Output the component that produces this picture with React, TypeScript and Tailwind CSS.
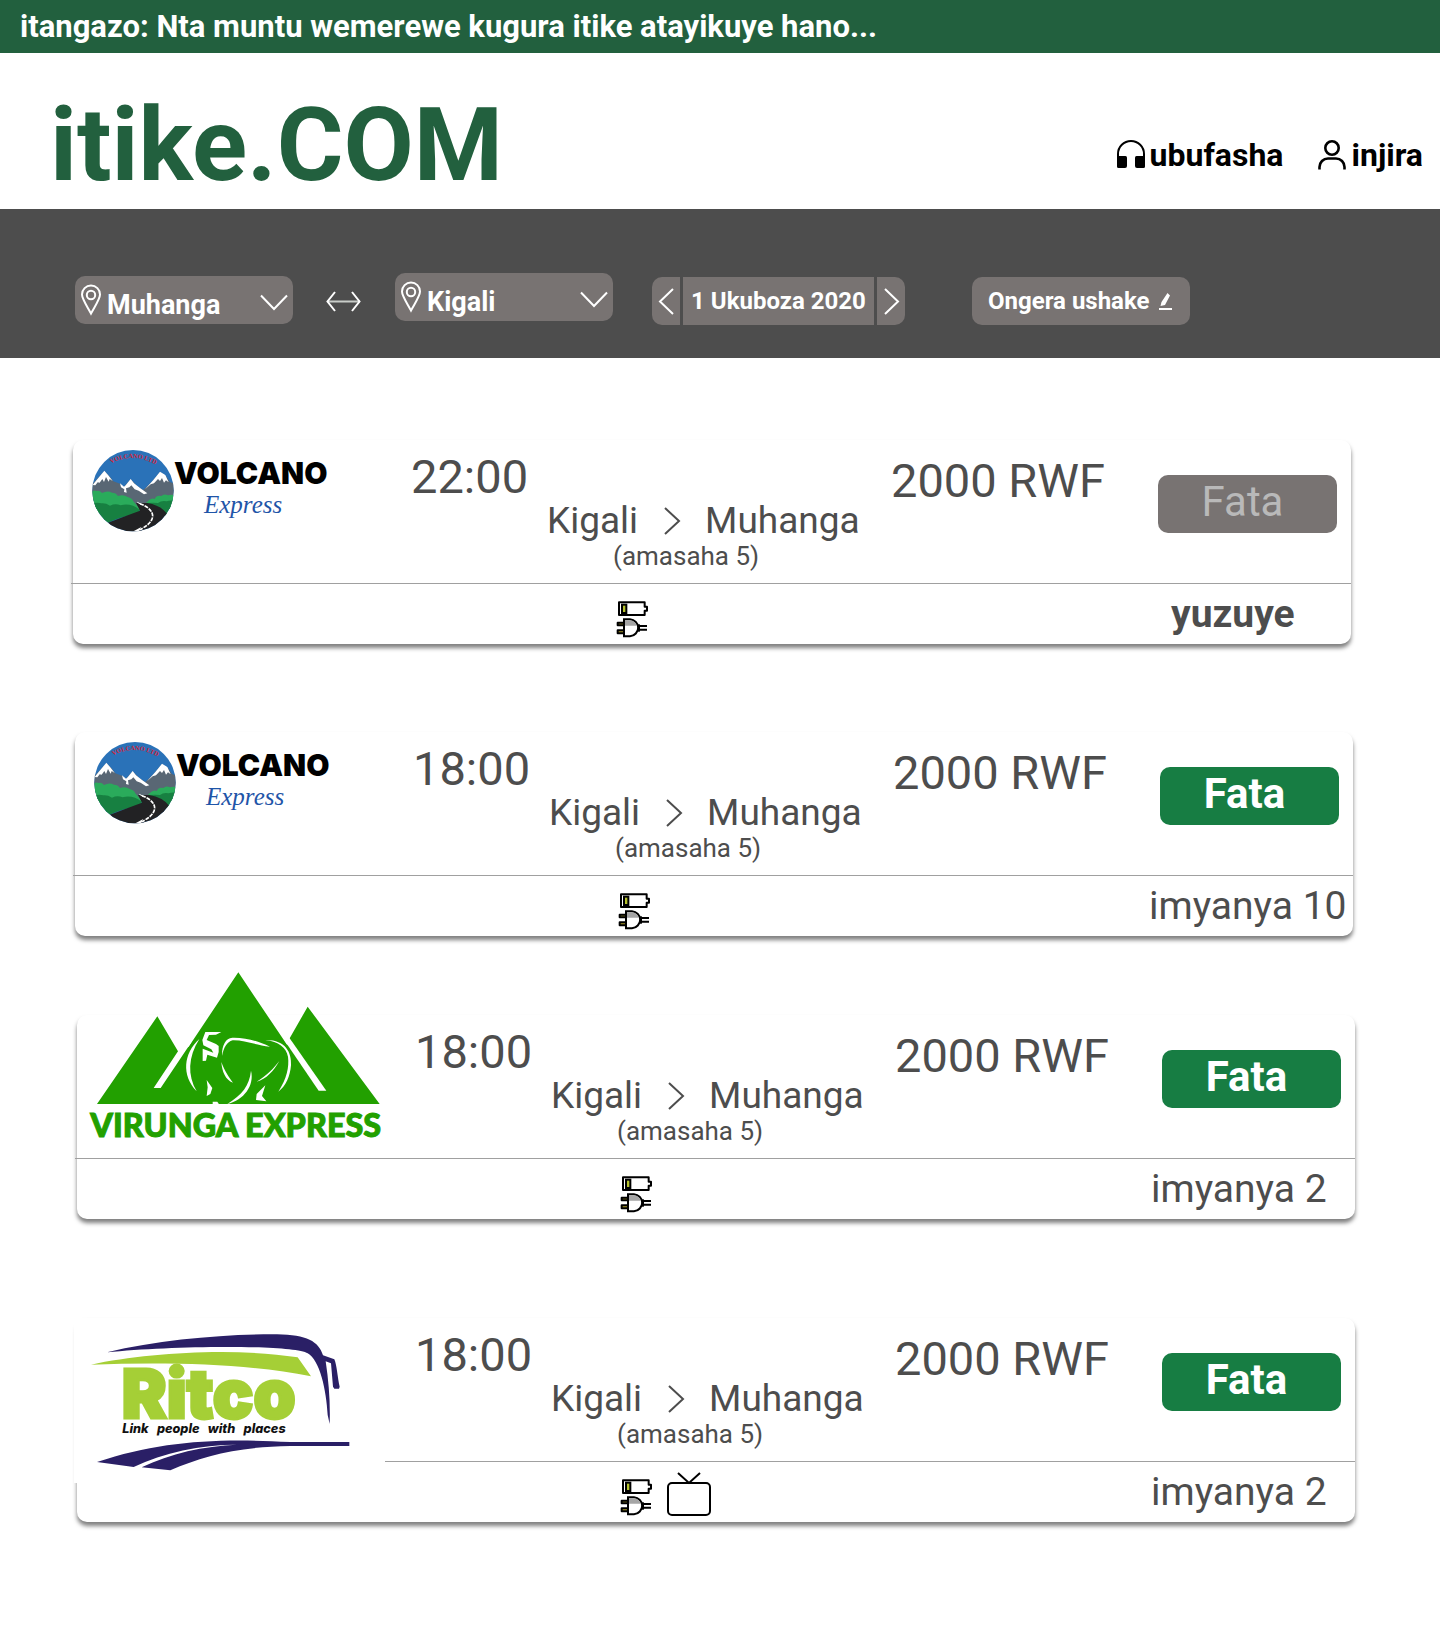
import React from "react";

const TOWNS = ["Muhanga", "Kigali"];

function HeadphonesIcon() {
  return (
    <svg width="30" height="30" viewBox="0 0 30 30" aria-hidden="true">
      <path d="M2 20V15a13 13 0 0 1 26 0v5" fill="none" stroke="#000" strokeWidth="2" />
      <path d="M1 17H9.500a1.500 1.500 0 0 1 1.500 1.500V27a2 2 0 0 1-2 2H2.500A1.500 1.500 0 0 1 1 27.500Z" />
      <path d="M29 17H20.500a1.500 1.500 0 0 0-1.500 1.500V27a2 2 0 0 0 2 2H27.500a1.500 1.500 0 0 0 1.500-1.500Z" />
    </svg>
  );
}

function UserIcon() {
  return (
    <svg width="30" height="32" viewBox="0 0 30 32" fill="none" stroke="#000" strokeWidth="2.600" aria-hidden="true">
      <circle cx="15" cy="9" r="6.700" />
      <path d="M2.500 30.500V28a8.500 8.500 0 0 1 8.500-8.500h8a8.500 8.500 0 0 1 8.500 8.500v2.500" />
    </svg>
  );
}

function PinIcon() {
  return (
    <svg width="22" height="32" viewBox="0 0 22 32" fill="none" stroke="#fff" strokeWidth="2" aria-hidden="true">
      <path d="M11 29.500C7 22 2 15 2 10.500a9 9 0 0 1 18 0C20 15 15 22 11 29.500Z" />
      <circle cx="11" cy="11" r="4.200" />
    </svg>
  );
}

function TownSelect({ label, value }: { label: string; value: string }) {
  return (
    <div className="relative w-[218px] shrink-0 text-white">
      <select
        aria-label={label}
        defaultValue={value}
        className="h-12 w-full appearance-none rounded-[10px] bg-[#787372] pt-[9px] pl-8 text-[27px] leading-[38px] font-bold"
      >
        {TOWNS.map((town) => (
          <option key={town}>{town}</option>
        ))}
      </select>
      <span className="pointer-events-none absolute top-2 left-[5px]">
        <PinIcon />
      </span>
      <svg
        className="pointer-events-none absolute top-[18px] right-[5px]"
        width="28"
        height="17"
        viewBox="0 0 28 17"
        fill="none"
        stroke="#fff"
        strokeWidth="2"
        aria-hidden="true"
      >
        <path d="M1 1.500 14 15 27 1.500" />
      </svg>
    </div>
  );
}

function VolcanoLogo() {
  return (
    <div className="flex pt-[10px] pl-[19px]">
      <svg width="82" height="82" viewBox="96 60 246 246" aria-hidden="true" className="shrink-0">
        <defs>
          <clipPath id="badge">
            <circle cx="219" cy="182" r="122" />
          </clipPath>
          <path id="badge-arc" d="M154 101Q222 62 300 112" />
        </defs>
        <g clipPath="url(#badge)">
          <rect x="96" y="60" width="246" height="246" fill="#2a72b8" />
          <path
            d="M90 170 133 123 150 140 160 154 182 162 190 172 212 148 232 168 250 180 275 155 300 126 318 138 330 156 345 162V240H90Z"
            fill="#596774"
          />
          <path
            d="M98 165 108 152 133 122 146 137 158 153 149 147 146 155 138 141 132 156 127 147 119 158 113 157 106 166Z"
            fill="#fff"
          />
          <path
            d="M180 160 192 170 197 166 212 147 222 160 240 174 262 190 252 193 236 182 224 178 214 166 208 172 198 175 200 188 192 186 193 178 183 172Z"
            fill="#fff"
          />
          <path
            d="M255 178 280 150 300 125 316 135 326 157 318 151 312 158 306 144 300 153 294 147 282 160 272 163Z"
            fill="#fff"
          />
          <path
            d="M90 190Q100 178 110 183 118 180 126 189 142 180 156 188 168 188 174 198 190 192 203 201 216 204 220 214L242 240 90 250Z"
            fill="#2aab5b"
          />
          <path d="M258 219Q274 202 284 207 290 194 304 198 312 190 324 196 334 192 345 196V240Z" fill="#2aab5b" />
          <path
            d="M90 222Q110 216 124 220 136 218 150 227 166 219 182 226 212 218 240 240L232 252Q180 260 140 280L90 290Z"
            fill="#178041"
          />
          <path d="M262 219Q280 218 294 219 304 211 320 214 332 210 345 213V270H322Q300 230 262 219Z" fill="#178041" />
          <path d="M228 219H262Q302 226 320 250L345 310H100L142 279Q196 258 240 242Z" fill="#222224" />
          <path d="M240 221C262 229 279 243 278 260 275 280 254 292 232 303" fill="none" stroke="#fff" strokeWidth="5" strokeDasharray="12 3" />
          <path d="M216 306 244 291 236 303Z" fill="#fff" />
          <path d="M232 217 246 224" stroke="#fff" strokeWidth="3" />
        </g>
        <text fill="#d6243a" fontFamily="Liberation Serif, serif" fontSize="19" fontWeight="700">
          <textPath href="#badge-arc">VOLCANO LTD</textPath>
        </text>
      </svg>
      <div className="pt-[5px]">
        <p className="font-['Inter',sans-serif] text-[30px] leading-9 font-black text-black">VOLCANO</p>
        <p className="pl-[30px] font-['Liberation_Serif',serif] text-[25px] leading-7 text-[#1f55a8] italic">Express</p>
      </div>
    </div>
  );
}

function VirungaLogo() {
  return (
    <svg
      className="-mt-[43px] ml-[13px] overflow-visible"
      width="292"
      height="176"
      viewBox="88 36 876 528"
      role="img"
      aria-label="Virunga Express"
    >
      <path d="M290 169 109 432H957L741 140 687 235 680 256 533 37 384 260 352 274Z" fill="#22a000" />
      <path d="M279 384H300L392 247 352 250 352 274Z" fill="#fff" />
      <path d="M672 242 774 392H797L687 235 672 230Z" fill="#fff" />
      <g fill="#fff">
        <path d="M416 237C368 280 362 346 408 394 380 345 382 292 416 237Z" />
        <path d="M434 216H482L466 224 445 225 438 240 466 252 474 258V276L469 293 440 284 436 302 426 303V266L458 278 452 268 428 256 425 240Z" />
        <path d="M484 288C483 258 494 234 515 233 555 232 590 243 628 260 585 255 550 240 516 241 498 246 490 262 484 288Z" />
        <path d="M614 240C672 238 694 276 691 316 688 350 676 378 653 395 678 355 686 322 682 290 676 262 654 245 614 240Z" />
        <path d="M482 306C492 334 504 350 517 368 494 360 484 334 482 306Z" />
        <path d="M656 303C640 332 616 358 588 365 620 346 638 326 656 303Z" />
        <path d="M571 332C582 376 550 420 500 432 544 404 566 378 571 332Z" />
        <path d="M614 376 588 402 586 420 617 424 604 408Z" />
        <path d="M438 360 455 384 449 402 438 408 441 382Z" />
        <path d="M456 425H470L476 434H456Z" />
      </g>
      <text
        x="89"
        y="530"
        fill="#22a000"
        stroke="#22a000"
        strokeWidth="3"
        fontFamily="Lato, sans-serif"
        fontSize="97"
        fontWeight="900"
      >
        VIRUNGA EXPRESS
      </text>
    </svg>
  );
}

function RitcoLogo() {
  return (
    <div className="relative z-10 -ml-[3px] h-[165px] w-[311px] bg-white pt-4 pl-[17px]">
      <svg width="260" height="140" viewBox="92 102 780 420" role="img" aria-label="Ritco, Link people with places">
        <path
          d="M140 157C300 118 500 102 650 103 740 105 775 124 788 166L822 178C830 196 832 236 838 260L836 266 822 266 818 260 812 190 796 184C806 250 810 310 808 372L802 345C798 270 778 180 742 160 700 134 340 136 140 157Z"
          fill="#2a1f66"
        />
        <path d="M92 194C260 158 520 142 712 172L752 229C560 190 320 186 92 194Z" fill="#a5cf36" />
        <path
          d="M110 486C300 424 460 414 690 426H867V438H690C540 440 430 466 330 511L244 502C330 460 430 438 530 434 420 434 310 458 220 501Z"
          fill="#2a1f66"
        />
        <text
          x="184"
          y="354"
          fill="#a5cf36"
          stroke="#a5cf36"
          strokeWidth="9"
          fontFamily="Inter, sans-serif"
          fontSize="202"
          fontWeight="900"
        >
          Ritco
        </text>
        <text
          x="186"
          y="398"
          fill="#111"
          fontFamily="Inter, sans-serif"
          fontSize="38"
          fontWeight="800"
          fontStyle="italic"
          xmlSpace="preserve"
        >
          Link   people   with   places
        </text>
      </svg>
    </div>
  );
}

function PowerIcon() {
  return (
    <svg width="32" height="38" viewBox="0 0 96 114" fill="none" stroke="#000" strokeWidth="6" aria-label="Amashanyarazi" role="img">
      <path d="M9 4H86V17H93V29H86V42H9Z" fill="#fff" strokeLinejoin="round" />
      <rect x="18" y="11" width="13" height="25" fill="#b5c22c" />
      <path d="M24 65H5V73H24ZM24 88H5V97H24Z" fill="#a8992a" strokeLinejoin="round" />
      <path d="M24 55V106H42C56 105 66 93 67 80 66 67 56 56 42 55Z" fill="#fff" />
      <path d="M27 58H42C52 59 60 65 62 74H27Z" fill="#a5a5a5" stroke="none" />
      <path d="M66 75H93M66 86H93" />
      <path d="M68 70V92" strokeWidth="8" />
    </svg>
  );
}

function TvIcon() {
  return (
    <svg width="44" height="44" viewBox="0 0 44 44" fill="none" stroke="#000" strokeWidth="2" aria-label="Televiziyo" role="img">
      <rect x="1" y="11" width="42" height="32" rx="4" />
      <path d="M11 1 22 11 33 1" />
    </svg>
  );
}

type Trip = {
  time: string;
  logo: React.ReactNode;
  seats: string;
  full?: boolean;
  tv?: boolean;
  place: string;
};

const TRIPS: Trip[] = [
  { time: "22:00", logo: <VolcanoLogo />, seats: "yuzuye", full: true, place: "mt-[82px] mr-[89px] ml-[73px]" },
  { time: "18:00", logo: <VolcanoLogo />, seats: "imyanya 10", place: "mt-[88px] mr-[87px] ml-[75px]" },
  { time: "18:00", logo: <VirungaLogo />, seats: "imyanya 2", place: "mt-[79px] mr-[85px] ml-[77px]" },
  { time: "18:00", logo: <RitcoLogo />, seats: "imyanya 2", tv: true, place: "mt-[99px] mr-[85px] ml-[77px]" },
];

function TripCard({ trip }: { trip: Trip }) {
  return (
    <article
      className={`rounded-[10px] bg-white text-[#4d4d4d] shadow-[0_4px_4px_rgba(0,0,0,0.5)] ${trip.place}`}
    >
      <div className="grid h-[143px] grid-cols-[338fr_136fr_344fr_267fr_193fr] items-start">
        <div>{trip.logo}</div>
        <p className="pt-[9px] text-[47px] leading-[56px]">{trip.time}</p>
        <div className="pt-[61px]">
          <p className="flex items-center text-[37px] leading-10">
            Kigali
            <svg className="mr-6 ml-[26px]" width="17" height="28" viewBox="0 0 17 28" fill="none" stroke="#4d4d4d" strokeWidth="2" aria-hidden="true">
              <path d="M1 1 15 14 1 27" />
            </svg>
            Muhanga
          </p>
          <p className="pl-[66px] text-[26px] leading-[30px]">(amasaha 5)</p>
        </div>
        <p className="pt-[13px] text-[47px] leading-[56px] whitespace-nowrap">2000 RWF</p>
        <button
          type="button"
          disabled={trip.full}
          className={`mt-[35px] h-[58px] w-[179px] rounded-[10px] pr-[10px] pb-1 text-[42px] leading-[54px] ${
            trip.full ? "bg-[#787372] text-[#b9b9b9]" : "bg-[#177d43] font-bold text-white"
          }`}
        >
          Fata
        </button>
      </div>
      <div className="-ml-[2px] grid h-[61px] grid-cols-[545fr_531fr_204fr] border-t border-[#a0a0a0]">
        <div className="col-start-2 flex gap-[15px]">
          <span className="pt-[17px]">
            <PowerIcon />
          </span>
          {trip.tv && (
            <span className="pt-[10px]">
              <TvIcon />
            </span>
          )}
        </div>
        <p className={`pt-1.5 text-[39px] leading-[48px] whitespace-nowrap ${trip.full ? "pl-6 font-bold" : ""}`}>
          {trip.seats}
        </p>
      </div>
    </article>
  );
}

export default function App() {
  return (
    <div className="bg-white pb-[104px] font-['Roboto',sans-serif]">
      <p className="bg-[#22603e] py-2 pl-5 text-[31px] leading-[37px] font-bold text-white">
        itangazo: Nta muntu wemerewe kugura itike atayikuye hano...
      </p>

      <header className="flex h-[156px] items-start justify-between pr-[17px] pl-[50px]">
        <h1 className="pt-8 text-[102px] leading-[120px] font-bold text-[#22603e]">itike.COM</h1>
        <nav className="flex gap-[34px] pt-[82px] text-[32px] leading-10 font-bold text-black">
          <a href="#ubufasha" className="flex gap-1">
            <span className="pt-1">
              <HeadphonesIcon />
            </span>
            ubufasha
          </a>
          <a href="#injira" className="flex gap-1">
            <span className="pt-1">
              <UserIcon />
            </span>
            injira
          </a>
        </nav>
      </header>

      <form className="flex items-start bg-[#4d4d4d] pt-16 pb-[33px] pl-[75px]">
        <div className="pt-[3px]">
          <TownSelect label="Aho uva" value="Muhanga" />
        </div>
        <button type="button" aria-label="Guhinduranya" className="mt-[18px] mr-[34px] ml-[33px]">
          <svg width="35" height="21" viewBox="0 0 35 21" fill="none" stroke="#fff" strokeWidth="2" aria-hidden="true">
            <path d="M1.500 10.500H33.500" stroke="#c9cdc9" />
            <path d="M9 1 1.500 10.500 9 20M26 1 33.500 10.500 26 20" />
          </svg>
        </button>
        <TownSelect label="Aho ujya" value="Kigali" />
        <div className="mt-1 ml-[39px] flex h-12 gap-[3px] text-white">
          <button type="button" aria-label="Umunsi ubanza" className="w-7 rounded-l-[10px] bg-[#787372] pl-1.5">
            <svg width="16" height="27" viewBox="0 0 16 27" fill="none" stroke="#fff" strokeWidth="2" aria-hidden="true">
              <path d="M15 1 2 13.500 15 26" />
            </svg>
          </button>
          <p className="w-[191px] bg-[#787372] text-center text-2xl leading-[48px] font-bold whitespace-nowrap">
            1 Ukuboza 2020
          </p>
          <button type="button" aria-label="Umunsi ukurikira" className="w-7 rounded-r-[10px] bg-[#787372] pl-[7px]">
            <svg width="16" height="27" viewBox="0 0 16 27" fill="none" stroke="#fff" strokeWidth="2" aria-hidden="true">
              <path d="M1 1 14 13.500 1 26" />
            </svg>
          </button>
        </div>
        <button
          type="button"
          className="mt-1 ml-[67px] flex h-12 w-[218px] items-center gap-[10px] rounded-[10px] bg-[#787372] pl-4 text-2xl font-bold whitespace-nowrap text-white"
        >
          Ongera ushake
          <svg width="14" height="17" viewBox="0 0 14 17" fill="#fff" aria-hidden="true">
            <path d="M0 15H13V17H0ZM8.500 0 11 2.500 6 12 1.500 13 2.500 9Z" />
          </svg>
        </button>
      </form>

      <main>
        {TRIPS.map((trip, index) => (
          <TripCard key={index} trip={trip} />
        ))}
      </main>
    </div>
  );
}
